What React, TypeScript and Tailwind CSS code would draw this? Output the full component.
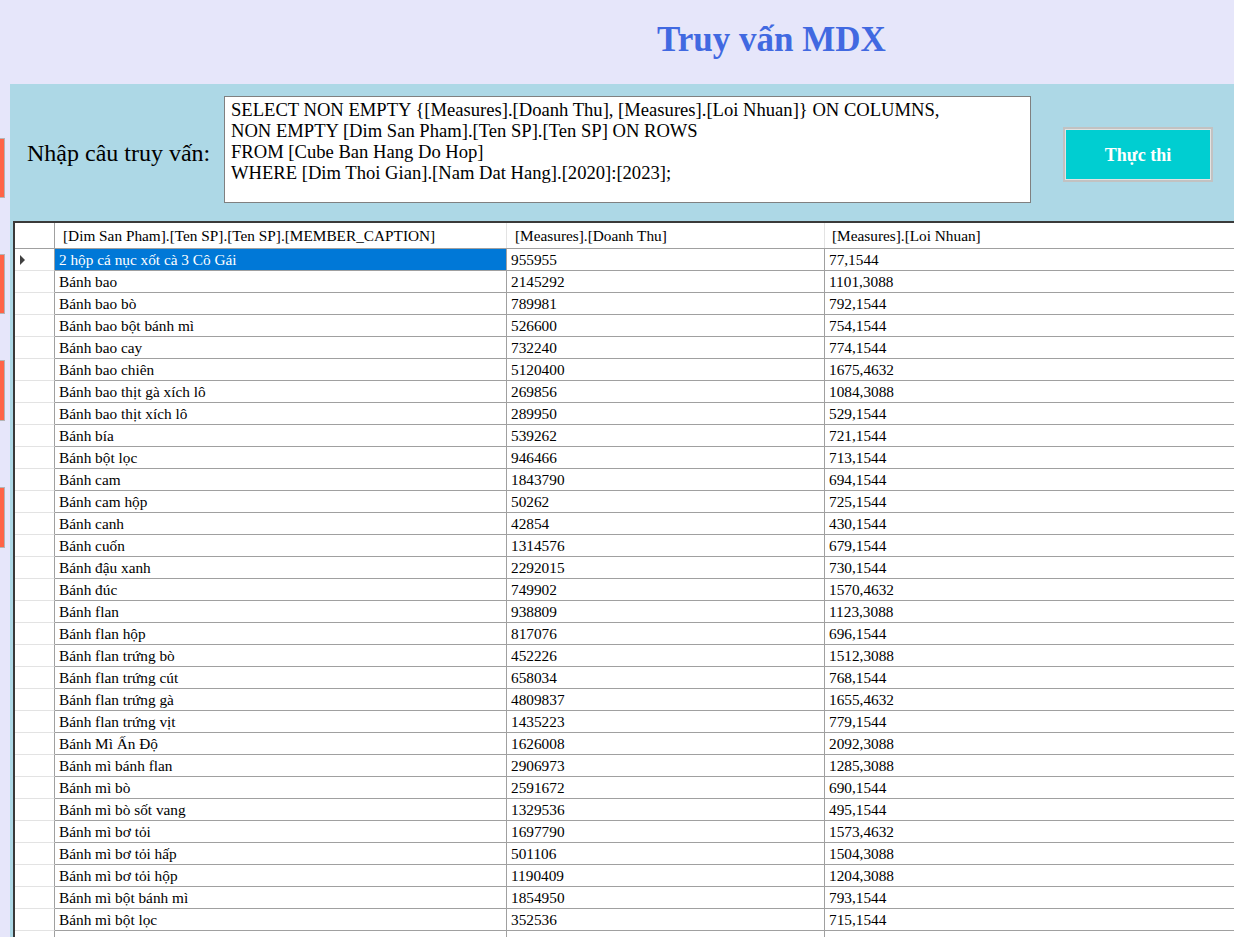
import React from "react";

const rows: [string, string, string][] = [
  ["2 hộp cá nục xốt cà 3 Cô Gái", "955955", "77,1544"],
  ["Bánh bao", "2145292", "1101,3088"],
  ["Bánh bao bò", "789981", "792,1544"],
  ["Bánh bao bột bánh mì", "526600", "754,1544"],
  ["Bánh bao cay", "732240", "774,1544"],
  ["Bánh bao chiên", "5120400", "1675,4632"],
  ["Bánh bao thịt gà xích lô", "269856", "1084,3088"],
  ["Bánh bao thịt xích lô", "289950", "529,1544"],
  ["Bánh bía", "539262", "721,1544"],
  ["Bánh bột lọc", "946466", "713,1544"],
  ["Bánh cam", "1843790", "694,1544"],
  ["Bánh cam hộp", "50262", "725,1544"],
  ["Bánh canh", "42854", "430,1544"],
  ["Bánh cuốn", "1314576", "679,1544"],
  ["Bánh đậu xanh", "2292015", "730,1544"],
  ["Bánh đúc", "749902", "1570,4632"],
  ["Bánh flan", "938809", "1123,3088"],
  ["Bánh flan hộp", "817076", "696,1544"],
  ["Bánh flan trứng bò", "452226", "1512,3088"],
  ["Bánh flan trứng cút", "658034", "768,1544"],
  ["Bánh flan trứng gà", "4809837", "1655,4632"],
  ["Bánh flan trứng vịt", "1435223", "779,1544"],
  ["Bánh Mì Ấn Độ", "1626008", "2092,3088"],
  ["Bánh mì bánh flan", "2906973", "1285,3088"],
  ["Bánh mì bò", "2591672", "690,1544"],
  ["Bánh mì bò sốt vang", "1329536", "495,1544"],
  ["Bánh mì bơ tỏi", "1697790", "1573,4632"],
  ["Bánh mì bơ tỏi hấp", "501106", "1504,3088"],
  ["Bánh mì bơ tỏi hộp", "1190409", "1204,3088"],
  ["Bánh mì bột bánh mì", "1854950", "793,1544"],
  ["Bánh mì bột lọc", "352536", "715,1544"],
  ["", "", ""],
];

const query = `SELECT NON EMPTY {[Measures].[Doanh Thu], [Measures].[Loi Nhuan]} ON COLUMNS,
NON EMPTY [Dim San Pham].[Ten SP].[Ten SP] ON ROWS
FROM [Cube Ban Hang Do Hop]
WHERE [Dim Thoi Gian].[Nam Dat Hang].[2020]:[2023];`;

export default function App() {
  return (
    <div
      className="w-[1234px] h-[937px] overflow-hidden bg-[#e6e6fa] flex flex-col text-black font-['Liberation_Serif','Times_New_Roman',serif]"
    >
      <div className="h-[84px] shrink-0 pl-[657px] pt-[19px]">
        <h1 className="text-[35px] leading-[41px] font-bold text-[#4169e1] whitespace-nowrap">
          Truy vấn MDX
        </h1>
      </div>
      <div className="flex flex-1 min-h-0">
        <div className="w-[10px] shrink-0 flex flex-col">
          <div className="mt-[54px] h-[60px] w-[5px] bg-[#ff6347] border border-l-0 border-[#b4b4b4]" />
          <div className="mt-[56px] h-[60px] w-[5px] bg-[#ff6347] border border-l-0 border-[#b4b4b4]" />
          <div className="mt-[46px] h-[61px] w-[5px] bg-[#ff6347] border border-l-0 border-[#b4b4b4]" />
          <div className="mt-[66px] h-[61px] w-[5px] bg-[#ff6347] border border-l-0 border-[#b4b4b4]" />
        </div>
        <div className="flex-1 min-w-0 bg-[#add8e6] flex flex-col pt-[12px] pl-[3px] overflow-hidden">
          <div className="flex items-start h-[107px] shrink-0">
            <div className="w-[211px] pl-[14px] mt-[43px] text-[24px] leading-[28px] whitespace-nowrap font-['Liberation_Serif',serif]">
              Nhập câu truy vấn:
            </div>
            <div className="w-[807px] h-[107px] bg-white border border-[#808080] pl-[6px] pt-[2px] text-[18.6px] leading-[21px] whitespace-pre">
              {query}
            </div>
            <div className="ml-[32px] mt-[31px] w-[150px] h-[55px] border-2 border-[#c2c2c2] p-px bg-[#e3e3e3]">
              <div className="w-full h-full bg-[#00ced1] flex items-center justify-center pt-[2px] text-white font-bold text-[18px]">
                Thực thi
              </div>
            </div>
          </div>
          <div className="mt-[18px] flex-1 min-h-0 border-t-2 border-l-2 border-[#3a3a3a] bg-white overflow-hidden text-[15.3px]">
            <div className="flex h-[26px] border-b border-[#a0a0a0]">
              <div className="w-[40px] shrink-0 border-r border-[#a0a0a0]" />
              <div className="w-[452px] shrink-0 border-r border-[#e3e3e3] pl-[8px] pt-[1px] flex items-center whitespace-nowrap">
                [Dim San Pham].[Ten SP].[Ten SP].[MEMBER_CAPTION]
              </div>
              <div className="w-[318px] shrink-0 border-r border-[#e3e3e3] pl-[8px] pt-[1px] flex items-center whitespace-nowrap">
                [Measures].[Doanh Thu]
              </div>
              <div className="flex-1 pl-[7px] pt-[1px] flex items-center whitespace-nowrap">
                [Measures].[Loi Nhuan]
              </div>
            </div>
            {rows.map((r, i) => (
              <div key={i} className="flex h-[22px]">
                <div className="w-[40px] shrink-0 border-r border-r-[#a0a0a0] border-b border-b-[#e3e3e3] flex items-center pl-[5px]">
                  {i === 0 && (
                    <svg width="6" height="10" viewBox="0 0 6 10">
                      <path d="M0 0 L5 5 L0 10 Z" fill="#404040" />
                    </svg>
                  )}
                </div>
                <div
                  className={
                    i === 0
                      ? "w-[452px] shrink-0 border-r border-b border-[#a0a0a0] pl-[4px] pt-[2px] flex items-center whitespace-nowrap bg-[#0078d7] text-white"
                      : "w-[452px] shrink-0 border-r border-b border-[#a0a0a0] pl-[4px] pt-[2px] flex items-center whitespace-nowrap"
                  }
                >
                  {r[0]}
                </div>
                <div className="w-[318px] shrink-0 border-r border-b border-[#a0a0a0] pl-[4px] pt-[2px] flex items-center whitespace-nowrap">
                  {r[1]}
                </div>
                <div className="flex-1 border-b border-[#a0a0a0] pl-[4px] pt-[2px] flex items-center whitespace-nowrap">
                  {r[2]}
                </div>
              </div>
            ))}
          </div>
        </div>
      </div>
    </div>
  );
}
